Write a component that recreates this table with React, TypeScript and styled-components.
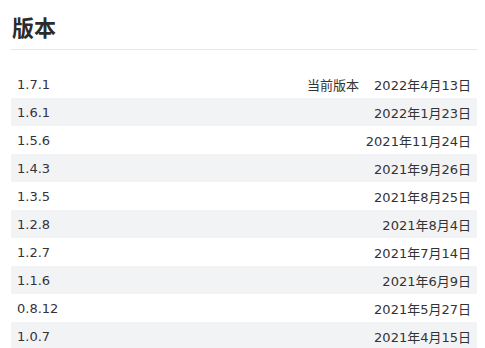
import styled, { createGlobalStyle } from "styled-components";

const GlobalStyle = createGlobalStyle`
  body {
    margin: 0;
    background: #ffffff;
    font-family: "DejaVu Sans", "Noto Sans CJK SC", sans-serif;
    color: #333333;
  }
`;

const StyledPage = styled.div`
  padding: 0 8px 0 11px;
`;

const StyledTitle = styled.h2`
  margin: 0;
  padding: 11px 0 8px 1px;
  font-family: "Noto Sans CJK SC", sans-serif;
  font-size: 22px;
  font-weight: 700;
  line-height: 30px;
  color: #2b2b2b;
  border-bottom: 1px solid #e6e6e6;
`;

const StyledTable = styled.table`
  width: 100%;
  margin-top: 20px;
  border-collapse: collapse;
  font-size: 13px;
`;

const StyledRow = styled.tr`
  height: 28px;

  &:nth-child(even) {
    background: #f2f3f5;
  }
`;

const StyledVersion = styled.td`
  padding: 0 6px;
  text-align: left;
  color: #35323f;
`;

const StyledDate = styled.td`
  padding: 0 6px;
  text-align: right;
  white-space: nowrap;
`;

const StyledCurrent = styled.span`
  margin-right: 15px;
`;

const releases = [
  { version: "1.7.1", date: "2022年4月13日", current: true },
  { version: "1.6.1", date: "2022年1月23日" },
  { version: "1.5.6", date: "2021年11月24日" },
  { version: "1.4.3", date: "2021年9月26日" },
  { version: "1.3.5", date: "2021年8月25日" },
  { version: "1.2.8", date: "2021年8月4日" },
  { version: "1.2.7", date: "2021年7月14日" },
  { version: "1.1.6", date: "2021年6月9日" },
  { version: "0.8.12", date: "2021年5月27日" },
  { version: "1.0.7", date: "2021年4月15日" },
];

export default function App() {
  return (
    <StyledPage>
      <GlobalStyle />
      <StyledTitle>版本</StyledTitle>
      <StyledTable>
        <tbody>
          {releases.map((r) => (
            <StyledRow key={r.version}>
              <StyledVersion>{r.version}</StyledVersion>
              <StyledDate>
                {r.current && <StyledCurrent>当前版本</StyledCurrent>}
                {r.date}
              </StyledDate>
            </StyledRow>
          ))}
        </tbody>
      </StyledTable>
    </StyledPage>
  );
}
